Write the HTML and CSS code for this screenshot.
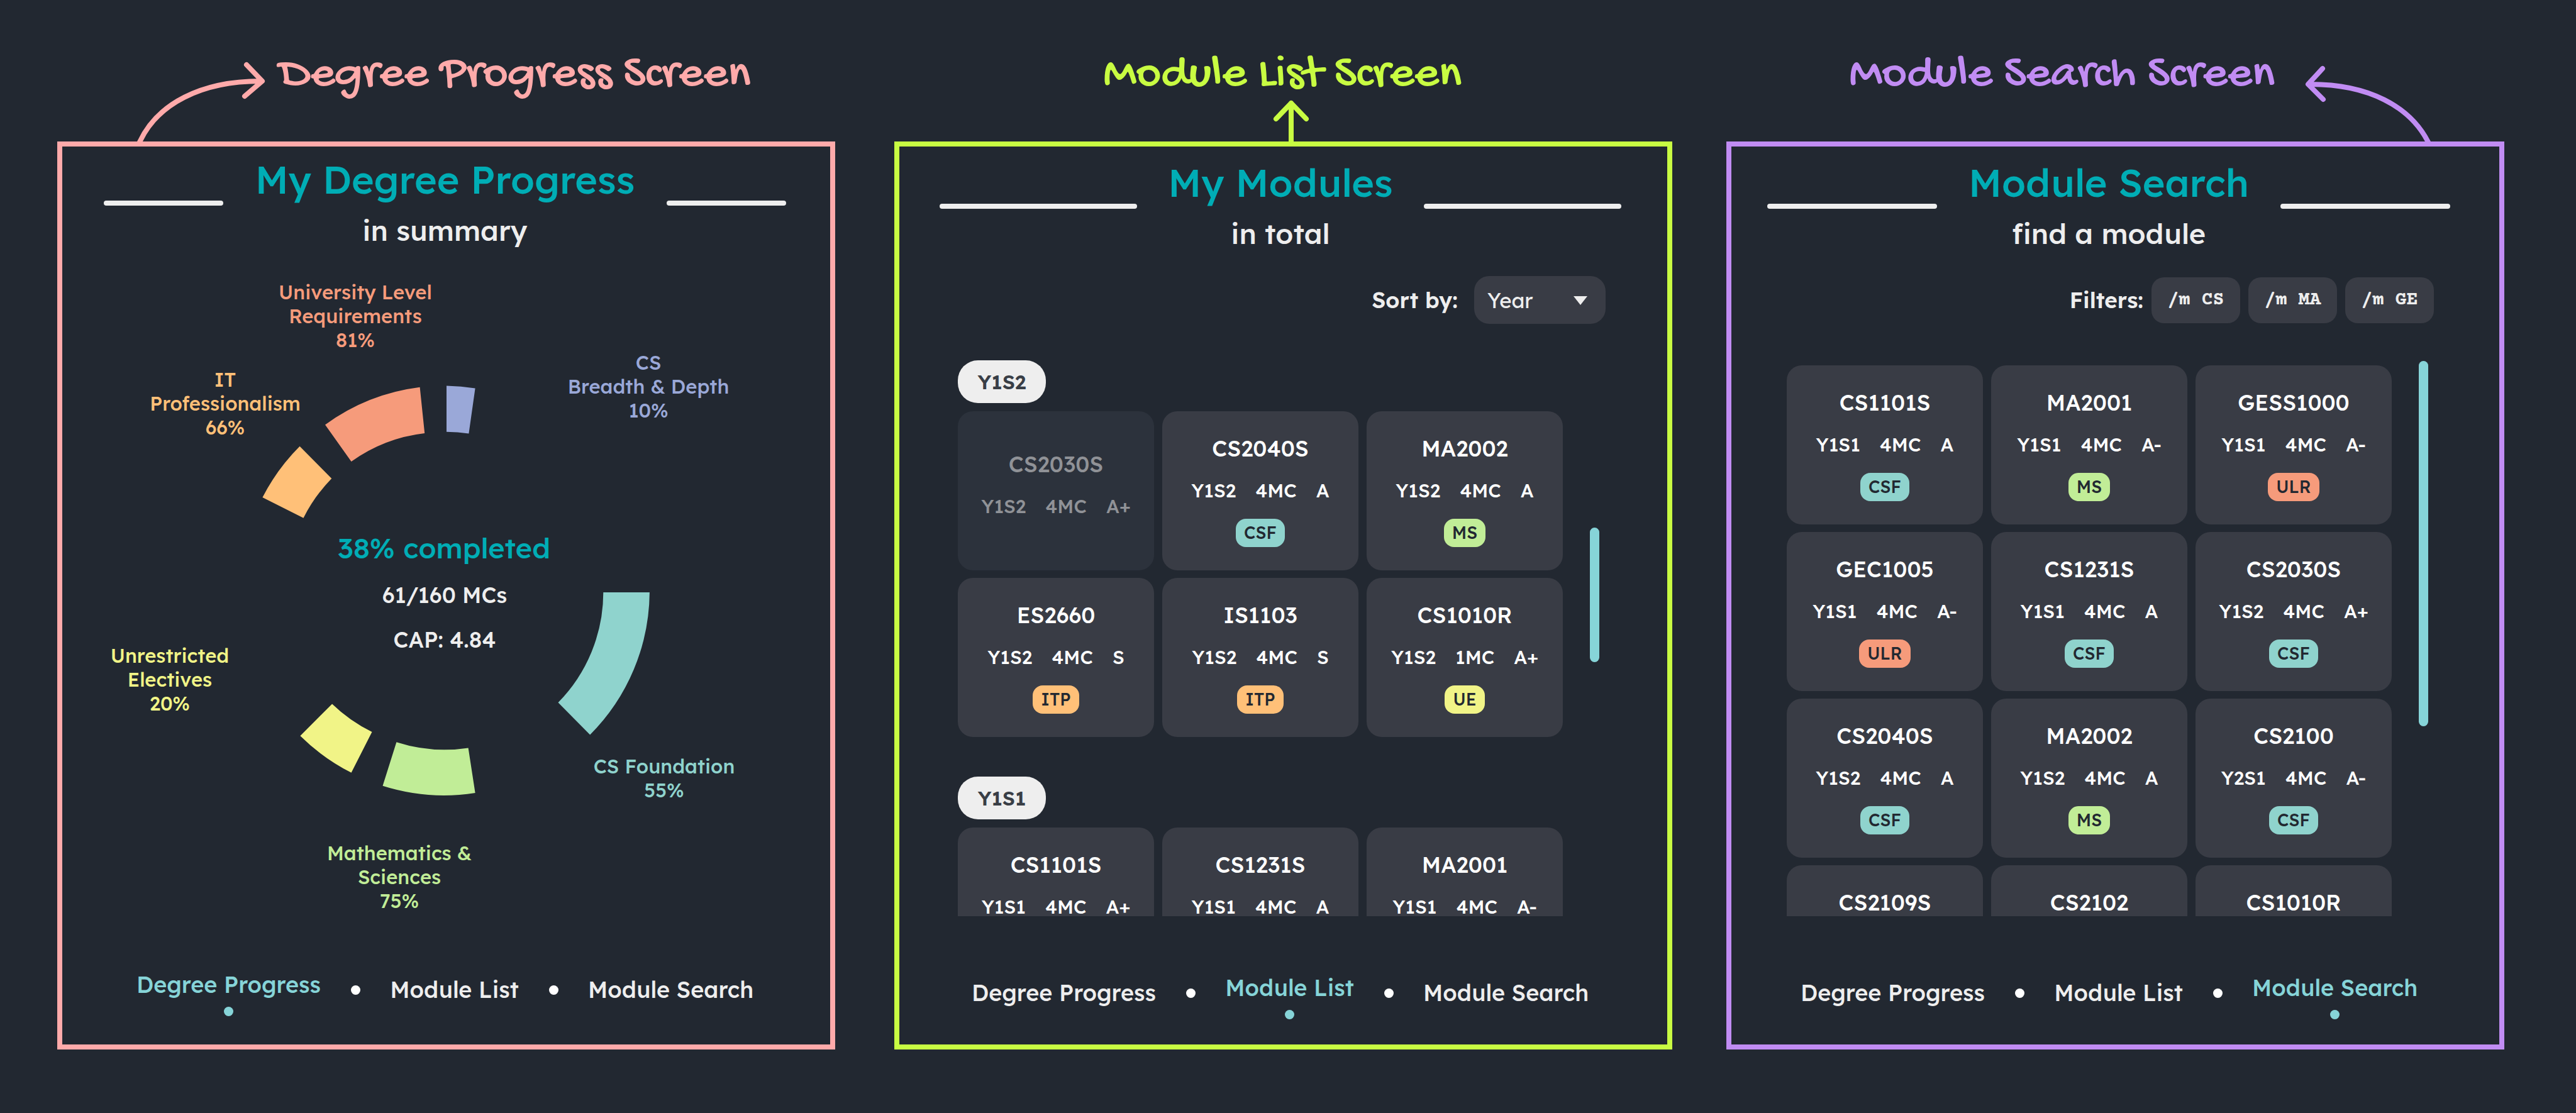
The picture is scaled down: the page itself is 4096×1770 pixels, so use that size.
FILE: index.html
```html
<!DOCTYPE html>
<html lang="en">
<head>
<meta charset="utf-8">
<title>Degree tracker screens</title>
<link rel="stylesheet" href="styles.css">
</head>
<body>
<main class="board">

  <section class="screen screen--progress">
    <div class="note">
      <svg class="note-arrow" width="207" height="130" viewBox="217 95 207 130" aria-hidden="true">
        <path d="M222 226C250 165 320 129 414 129M392 103L417 129L389 153"/>
      </svg>
      <h2 class="note-title">Degree Progress Screen</h2>
    </div>
    <div class="panel">
      <header class="head">
        <span class="rule"></span>
        <div class="head-text"><h1>My Degree Progress</h1><p>in summary</p></div>
        <span class="rule"></span>
      </header>
      <svg class="chart" viewBox="99 395 1221 1150" role="img" aria-label="Degree progress by category">
        <path class="blue" d="M710 613.5A324 324 0 0 1 755.6 617.4L745.4 689.5A250 250 0 0 0 710 686.7Z"/>
        <path class="salmon" d="M517 675.4A324 324 0 0 1 667.6 615.7L675.2 689A250 250 0 0 0 558.6 734Z"/>
        <path class="orange" d="M417.4 791A324 324 0 0 1 476.6 709.8L527.3 761A250 250 0 0 0 482.5 823.7Z"/>
        <path class="teal" d="M1032.9 942A324 324 0 0 1 938.2 1168.5L887.5 1117.2A250 250 0 0 0 959.3 942Z"/>
        <path class="green" d="M755.6 1261A324 324 0 0 1 608.5 1249.7L630.4 1180.3A250 250 0 0 0 744.6 1189.4Z"/>
        <path class="yellow" d="M558.6 1228.8A324 324 0 0 1 477.4 1170.2L528.1 1119.5A250 250 0 0 0 591.5 1164Z"/>
        <g class="label salmon"><text x="565" y="476">University Level</text><text x="565" y="514">Requirements</text><text x="565" y="552">81%</text></g>
        <g class="label orange"><text x="358" y="615">IT</text><text x="358" y="653">Professionalism</text><text x="358" y="691">66%</text></g>
        <g class="label blue"><text x="1031" y="588">CS</text><text x="1031" y="626">Breadth &amp; Depth</text><text x="1031" y="664">10%</text></g>
        <g class="label yellow"><text x="270" y="1054">Unrestricted</text><text x="270" y="1092">Electives</text><text x="270" y="1130">20%</text></g>
        <g class="label teal"><text x="1056" y="1230">CS Foundation</text><text x="1056" y="1268">55%</text></g>
        <g class="label green"><text x="635" y="1368">Mathematics &amp;</text><text x="635" y="1406">Sciences</text><text x="635" y="1444">75%</text></g>
        <text class="total" x="706" y="888">38% completed</text>
        <text class="fact" x="707" y="959">61/160 MCs</text>
        <text class="fact" x="707" y="1030">CAP: 4.84</text>
      </svg>
      <nav class="nav">
        <a class="w-progress active" href="#progress">Degree Progress</a><i></i>
        <a class="w-list" href="#list">Module List</a><i></i>
        <a class="w-search" href="#search">Module Search</a>
      </nav>
    </div>
  </section>

  <section class="screen screen--list">
    <div class="note">
      <h2 class="note-title">Module List Screen</h2>
      <svg class="note-arrow" width="60" height="70" viewBox="2023 155 60 70" aria-hidden="true">
        <path d="M2053 226V164M2029 189L2053 164L2077 189"/>
      </svg>
    </div>
    <div class="panel">
      <header class="head">
        <span class="rule"></span>
        <div class="head-text"><h1>My Modules</h1><p>in total</p></div>
        <span class="rule"></span>
      </header>
      <div class="toolbar">
        <label for="sort">Sort by:</label>
        <span class="select">
          <select id="sort"><option>Year</option></select>
          <svg width="24" height="14" viewBox="0 0 24 14" aria-hidden="true"><path d="M1 0H23L12 14Z"/></svg>
        </span>
      </div>
      <div class="scroller">
        <div class="content">
          <h3 class="term">Y1S2</h3>
          <div class="cards">
            <article class="card card--dim"><h4>CS2030S</h4><p><span>Y1S2</span><span>4MC</span><span>A+</span></p></article>
            <article class="card"><h4>CS2040S</h4><p><span>Y1S2</span><span>4MC</span><span>A</span></p><b class="teal">CSF</b></article>
            <article class="card"><h4>MA2002</h4><p><span>Y1S2</span><span>4MC</span><span>A</span></p><b class="green">MS</b></article>
            <article class="card"><h4>ES2660</h4><p><span>Y1S2</span><span>4MC</span><span>S</span></p><b class="orange">ITP</b></article>
            <article class="card"><h4>IS1103</h4><p><span>Y1S2</span><span>4MC</span><span>S</span></p><b class="orange">ITP</b></article>
            <article class="card"><h4>CS1010R</h4><p><span>Y1S2</span><span>1MC</span><span>A+</span></p><b class="yellow">UE</b></article>
          </div>
          <h3 class="term">Y1S1</h3>
          <div class="cards">
            <article class="card card--cut"><h4>CS1101S</h4><p><span>Y1S1</span><span>4MC</span><span>A+</span></p></article>
            <article class="card card--cut"><h4>CS1231S</h4><p><span>Y1S1</span><span>4MC</span><span>A</span></p></article>
            <article class="card card--cut"><h4>MA2001</h4><p><span>Y1S1</span><span>4MC</span><span>A-</span></p></article>
          </div>
        </div>
        <span class="thumb"></span>
      </div>
      <nav class="nav">
        <a class="w-progress" href="#progress">Degree Progress</a><i></i>
        <a class="w-list active" href="#list">Module List</a><i></i>
        <a class="w-search" href="#search">Module Search</a>
      </nav>
    </div>
  </section>

  <section class="screen screen--search">
    <div class="note">
      <h2 class="note-title">Module Search Screen</h2>
      <svg class="note-arrow" width="206" height="130" viewBox="3661 95 206 130" aria-hidden="true">
        <path d="M3861 226C3832 169 3766 134 3674 134M3693 109L3670 134L3694 158"/>
      </svg>
    </div>
    <div class="panel">
      <header class="head">
        <span class="rule"></span>
        <div class="head-text"><h1>Module Search</h1><p>find a module</p></div>
        <span class="rule"></span>
      </header>
      <div class="toolbar">
        <span class="toolbar-label">Filters:</span>
        <button type="button">/m CS</button>
        <button type="button">/m MA</button>
        <button type="button">/m GE</button>
      </div>
      <div class="scroller">
        <div class="content">
          <div class="cards">
            <article class="card"><h4>CS1101S</h4><p><span>Y1S1</span><span>4MC</span><span>A</span></p><b class="teal">CSF</b></article>
            <article class="card"><h4>MA2001</h4><p><span>Y1S1</span><span>4MC</span><span>A-</span></p><b class="green">MS</b></article>
            <article class="card"><h4>GESS1000</h4><p><span>Y1S1</span><span>4MC</span><span>A-</span></p><b class="salmon">ULR</b></article>
            <article class="card"><h4>GEC1005</h4><p><span>Y1S1</span><span>4MC</span><span>A-</span></p><b class="salmon">ULR</b></article>
            <article class="card"><h4>CS1231S</h4><p><span>Y1S1</span><span>4MC</span><span>A</span></p><b class="teal">CSF</b></article>
            <article class="card"><h4>CS2030S</h4><p><span>Y1S2</span><span>4MC</span><span>A+</span></p><b class="teal">CSF</b></article>
            <article class="card"><h4>CS2040S</h4><p><span>Y1S2</span><span>4MC</span><span>A</span></p><b class="teal">CSF</b></article>
            <article class="card"><h4>MA2002</h4><p><span>Y1S2</span><span>4MC</span><span>A</span></p><b class="green">MS</b></article>
            <article class="card"><h4>CS2100</h4><p><span>Y2S1</span><span>4MC</span><span>A-</span></p><b class="teal">CSF</b></article>
            <article class="card card--cut"><h4>CS2109S</h4></article>
            <article class="card card--cut"><h4>CS2102</h4></article>
            <article class="card card--cut"><h4>CS1010R</h4></article>
          </div>
        </div>
        <span class="thumb"></span>
      </div>
      <nav class="nav">
        <a class="w-progress" href="#progress">Degree Progress</a><i></i>
        <a class="w-list" href="#list">Module List</a><i></i>
        <a class="w-search active" href="#search">Module Search</a>
      </nav>
    </div>
  </section>

</main>
</body>
</html>
```
FILE: styles.css
```css
* { box-sizing: border-box; }

body {
  margin: 0;
  background: #222831;
  color: #eee;
  font-family: "Lexend", "Inter", sans-serif;
  font-weight: 500;
}

h1, h2, h3, h4, p { margin: 0; font-weight: inherit; }

.board {
  display: flex;
  align-items: flex-start;
  padding: 0 114px 101px 91px;
}

.screen { flex: 1 1 0; min-width: 0; }
.screen--progress { --accent: #ffaaaa; }
.screen--list { --accent: #c8fc42; margin-left: 94px; }
.screen--search { --accent: #c18cf3; margin-left: 86px; }

/* Handwritten captions above each screen */
.note {
  display: flex;
  height: 225px;
  padding-top: 80px;
  color: var(--accent);
}
.note-title {
  font-family: "Gochi Hand", "Comic Neue", sans-serif;
  font-size: 76px;
  font-weight: 400;
  line-height: 80px;
  white-space: nowrap;
}
.note-arrow {
  flex: none;
  fill: none;
  stroke: currentColor;
  stroke-width: 8;
  stroke-linecap: round;
  stroke-linejoin: round;
}
.screen--progress .note { padding-left: 126px; gap: 20px; }
.screen--progress .note-arrow { align-self: flex-end; }
.screen--list .note { flex-direction: column; align-items: center; padding-left: 25px; }
.screen--list .note-title { padding-right: 28px; }
.screen--list .note-arrow { margin-top: -5px; }
.screen--search .note { padding-right: 115px; gap: 44px; justify-content: flex-end; }
.screen--search .note-arrow { align-self: flex-end; }

.panel {
  display: flex;
  flex-direction: column;
  border: 8px solid var(--accent);
}

.head {
  display: flex;
  align-items: center;
  justify-content: space-between;
}
.head-text {
  display: flex;
  flex-direction: column;
  gap: 18px;
  text-align: center;
  white-space: nowrap;
}
.head h1 { font-size: 61px; line-height: 70px; color: #00adb5; }
.head p { font-size: 45px; line-height: 57px; }
.rule { flex: none; height: 8px; border-radius: 4px; background: #eee; }
.screen--progress .head { padding: 17px 70px 0 66px; }
.screen--list .head { padding: 22px 73px 0 64px; }
.screen--search .head { padding: 22px 78px 0 57px; }
.screen--progress .rule { width: 190px; }
.screen--list .rule { width: 314px; }
.screen--search .rule { width: 270px; }

.chart { display: block; width: 100%; height: auto; }
.chart text { text-anchor: middle; }
.label { font-size: 31px; }
.total { font-size: 45px; }
.fact { font-size: 35px; }

.blue { --tone: #9aa8d8; }
.salmon { --tone: #f69b7b; }
.orange { --tone: #ffc078; }
.teal { --tone: #8fd3cd; }
.green { --tone: #c1ed97; }
.yellow { --tone: #f1f487; }
.chart [class] { fill: var(--tone); }
.chart .total { fill: #00adb5; }
.chart .fact { fill: #eee; }

.toolbar {
  display: flex;
  align-items: center;
  justify-content: flex-end;
  gap: 13px;
  height: 76px;
  margin-top: 39px;
}
.toolbar label, .toolbar-label { font-size: 35px; font-weight: 600; }
.screen--list .toolbar { padding-right: 98px; gap: 26px; }
.screen--search .toolbar { padding-right: 104px; }

.select { position: relative; width: 209px; height: 76px; }
.select select {
  width: 100%;
  height: 100%;
  padding: 0 21px;
  border: 0;
  border-radius: 24px;
  background: #393c45;
  color: #eee;
  font: inherit;
  font-size: 33px;
  font-weight: 400;
  appearance: none;
}
.select svg {
  position: absolute;
  top: 32px;
  right: 28px;
  fill: #eee;
  pointer-events: none;
}
.toolbar button {
  width: 141px;
  height: 73px;
  padding: 0;
  border: 0;
  border-radius: 20px;
  background: #393c45;
  color: #eee;
  font: 700 30px "Courier Prime", "Liberation Mono", monospace;
}

.scroller {
  display: flex;
  align-items: flex-start;
  gap: 43px;
  height: 884px;
  margin-top: 58px;
  overflow: hidden;
}
.screen--list .scroller { padding: 0 108px 0 93px; }
.screen--search .scroller { padding: 0 113px 0 88px; }
.content { flex: 1; }
.screen--search .content { padding-top: 8px; }
.thumb { width: 15px; border-radius: 8px; background: #86d4d8; }
.screen--list .thumb { height: 214px; margin-top: 266px; }
.screen--search .thumb { height: 581px; margin-top: 1px; }

.term {
  width: 140px;
  border-radius: 32px;
  background: #eee;
  color: #393e46;
  font-size: 32px;
  font-weight: 600;
  line-height: 68px;
  text-align: center;
}
.cards {
  display: grid;
  grid-template-columns: repeat(3, 1fr);
  gap: 12px 13px;
}
.term + .cards { margin-top: 13px; }
.cards + .term { margin-top: 63px; }

.card {
  display: flex;
  flex-direction: column;
  align-items: center;
  justify-content: center;
  gap: 26px;
  height: 253px;
  border-radius: 24px;
  background: #393c45;
  color: #fff;
}
.card h4 { font-size: 35px; line-height: 44px; }
.card p { display: flex; gap: 31px; font-size: 30px; line-height: 38px; }
.card b {
  padding: 0 13px;
  border-radius: 16px;
  background: var(--tone);
  color: #222831;
  font-size: 27px;
  font-weight: 500;
  line-height: 45px;
}
.card--dim { padding-bottom: 22px; background: #2c323c; color: #909297; }
.card--cut { justify-content: flex-start; padding-top: 37px; }

.nav {
  display: flex;
  align-items: flex-start;
  justify-content: center;
  gap: 51px;
  height: 71px;
}
.nav a {
  display: flex;
  flex-direction: column;
  align-items: center;
  gap: 14px;
  padding-top: 8px;
  color: #eee;
  font-size: 36px;
  line-height: 42px;
  text-decoration: none;
  white-space: nowrap;
}
.nav i { width: 15px; height: 15px; margin-top: 22px; border-radius: 50%; background: #fff; }
.nav a.active { padding-top: 0; color: #86d4d8; }
.nav a.active::after {
  content: "";
  width: 15px;
  height: 15px;
  border-radius: 50%;
  background: #86d4d8;
}
.nav .w-progress { width: 286px; }
.nav .w-list { width: 198px; }
.nav .w-search { width: 256px; }
.screen--progress .nav { margin-bottom: 45px; padding-right: 4px; }
.screen--list .nav { margin: 93px 0 40px; padding-right: 10px; }
.screen--search .nav { margin: 93px 0 40px; padding-right: 20px; }
```
